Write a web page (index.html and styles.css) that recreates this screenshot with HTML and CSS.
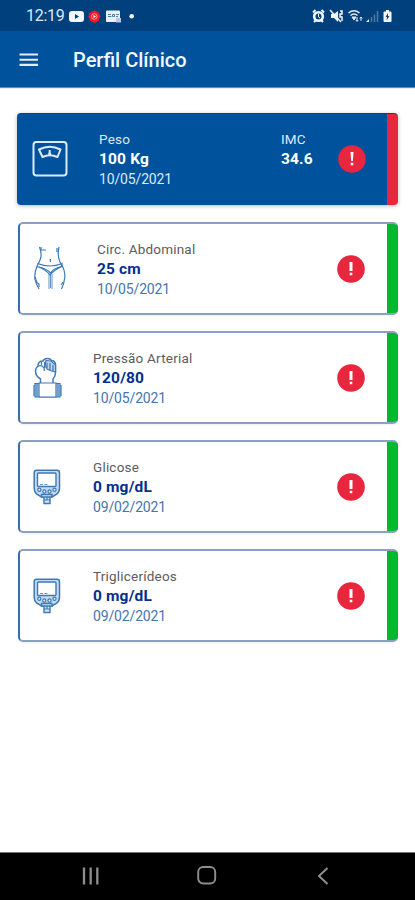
FILE: index.html
```
<!DOCTYPE html>
<html lang="pt-BR">
<head>
<meta charset="utf-8">
<meta name="viewport" content="width=device-width, initial-scale=1">
<title>Perfil Clínico</title>
<link rel="stylesheet" href="styles.css">
</head>
<body>
<svg width="0" height="0" class="defs" aria-hidden="true">
  <symbol id="meter" viewBox="0 0 28 36">
    <path d="M3.500 1.200h20.500q2.500 0 2.500 2.500V19q0 4-2.500 6l-5 3H8.500l-5-3Q1.200 23 1.200 19V3.700q0-2.500 2.300-2.500Z" fill="#c4dcf2" stroke-width="1.500"/>
    <rect x="4.500" y="4" width="18.500" height="13.500" rx="1" fill="#fff" stroke-width="1.400"/>
    <path d="M7 15.500h3M11.500 15.500h3" stroke-width=".8"/>
    <g fill="#e9f3fc"><circle cx="6.300" cy="20.800" r="1.600"/><circle cx="11.300" cy="22.500" r="1.600"/><circle cx="16.500" cy="22.500" r="1.600"/><circle cx="21.500" cy="20.800" r="1.600"/></g>
    <path d="M8.500 25.500h10.500v2.500H8.500ZM11 28h6v6.500h-6Z" fill="#d5e6f6" stroke-width="1.400"/><path d="M11 31h6M14 28v3"/>
  </symbol>
</svg>
<div class="screen">
  <header class="status">
    <span class="clock">12:19</span>
    <svg class="status-left" width="68" height="16" viewBox="0 0 68 16">
      <rect x="0" y="3" width="15" height="11" rx="3" fill="#f4f7fb"/><path d="M6 6l4 2.500L6 11Z" fill="#00407c"/>
      <path d="M25.500 2.300l4.500 2.400 1.200 3.500-1.500 4.500-4.200 2.300-4.500-2.300-1.500-4.500L20.700 4.700Z" fill="#f3192a"/><circle cx="25.300" cy="8.500" r="2.800" fill="none" stroke="#ff9a98"/><path d="M24.500 7l2.500 1.500-2.500 1.500Z" fill="#fff"/>
      <path d="M38 2.500h12a1 1 0 0 1 1 1V14H38a1 1 0 0 1-1-1V3.500a1 1 0 0 1 1-1Z" fill="#eaf0f7"/><path d="M39 6.500h3M39 8.500h3.500M43.500 6.500h2v2h-2ZM47 6.500h3M47 8.500h2" stroke="#557ba3" fill="none"/><rect x="47" y="10" width="5" height="4.500" fill="#b8cadf"/>
      <circle cx="62.700" cy="8.200" r="2.300" fill="#f4f7fb"/>
    </svg>
    <svg class="status-right" width="80" height="16" viewBox="0 0 80 16">
      <g fill="none" stroke="#f4f7fb"><circle cx="6.500" cy="8.500" r="4.300" stroke-width="2.600"/><path d="M1 4.500L3.500 2M9.500 2L12 4.500M2 14l2-2M11 14l-2-2" stroke-width="2"/><path d="M6.500 6v3l1.500 1"/></g>
      <path d="M19 6h3l4-3v11l-4-4h-3Z" fill="#f4f7fb"/><path d="M18 2l11 12M28 3h2v3h-2v3h2v4" fill="none" stroke="#f4f7fb" stroke-width="1.500"/>
      <g fill="none" stroke="#e2eaf4"><path d="M36.500 5q5.500-4.500 11 0M38.500 7.500q3.500-3 7 0" stroke-width="1.600"/><path d="M40 9h4l-2 3Z" fill="#e2eaf4"/><path d="M45 9v4M43.800 12L45 13.500l1.200-1.500M49 13V9M47.800 10.500L49 9l1.200 1.500"/></g>
      <path d="M54 14l3-3v3Z" fill="#e2eaf4"/><path d="M59.500 14V9M62.500 14V6.500M65.500 14V3" stroke="#4d7ba8" stroke-width="1.500"/>
      <path d="M72 3.500h2V2h3v1.500h2V14h-7Z" fill="#f4f7fb"/><path d="M71.500 4h8v9.500h-8Z" fill="#f4f7fb"/><path d="M76 5l-2.500 4H75l-.5 3.500L77.500 8H76Z" fill="#17436f"/>
    </svg>
  </header>
  <div class="appbar">
    <svg width="20" height="14" viewBox="0 0 20 14"><path d="M.5 1.500h18.500M.5 6.700h18.500M.5 11.900h18.500" stroke="#e5eef8" stroke-width="2.100"/></svg>
    <h1>Perfil Clínico</h1>
  </div>
  <main>
    <section class="card weight">
      <svg class="icon" width="36" height="36" viewBox="0 0 36 36" fill="none" stroke="#dceaff" stroke-width="2"><rect x="1.500" y="1" width="33" height="33.500" rx="3"/><path d="M7 8.500Q17.700 3 28.500 8.500L25.500 16q-7.800-3.500-15 0Z" stroke-linejoin="round"/><path d="M17.700 9v4"/><circle cx="17.700" cy="12.800" r="1.500" fill="#dceaff" stroke="none"/></svg>
      <div class="info"><span class="label">Peso</span><strong>100 Kg</strong><time>10/05/2021</time></div>
      <div class="imc"><span class="label">IMC</span><strong>34.6</strong></div>
      <svg class="alert" width="28" height="28" viewBox="0 0 28 28"><circle cx="14" cy="14" r="13.800"/><path d="M12.500 7h3l-.6 9h-1.800ZM12.700 17.700h2.600v2.600h-2.600Z"/></svg>
    </section>
    <section class="card waist">
      <svg class="icon line" width="34" height="46" viewBox="0 0 34 46"><path d="M6.500 1q3 8 .5 13-1 3-2.500 5Q1 27 2 33q1 5 4 10M26 1q-2 8 1 15l2 3q4 8 2.500 14-.5 5-3 10"/><path d="M4.500 17.500q12.500 5 24.500 0l-.5 3Q21 22 17.500 27Q13 22 4 20.500M4 20.500q9 3 13 8.500Q21 24 29 20.500"/><path d="M16 28v15M19 28v15M17.500 29v13" stroke-width=".8"/><path d="M7 4h6M24 2v4M17.300 13v3M3 36l3 2v3M30 36l-2 3M8 1v3M2 31l2 6"/></svg>
      <div class="info"><span class="label">Circ. Abdominal</span><strong>25 cm</strong><time>10/05/2021</time></div>
      <svg class="alert" width="28" height="28" viewBox="0 0 28 28"><circle cx="14" cy="14" r="13.800"/><path d="M12.500 7h3v9h-3ZM12.700 17.700h2.600v2.600h-2.600Z"/></svg>
    </section>
    <section class="card pressure">
      <svg class="icon line" width="29" height="42" viewBox="0 0 29 42"><path d="M7.500 26v-4Q2.500 19 2.500 14q0-3 2.500-5 0-5 5-5 1-2.500 4.500-2.500 3 0 4 2 3.500 0 4 4v8q0 4-2.500 6.500V26" stroke-width="1.500"/><path d="M13 3.500l5 .5 4.500 4v7l-4-1-4.500-2-2-4Z" fill="#bcd5ec"/><path d="M5 9q4-1 5 1 2 1 1 4M8.500 5v3M11.500 5v6M14 6v5M17 6v7M20 8v6"/><path d="M2 26.500h25v13.500H2Z" fill="#c4daef"/><path d="M6 26h17v14H6Z" fill="#fff"/><path d="M4 27v13M1 28v11M25 27v13M28 28v11"/></svg>
      <div class="info"><span class="label">Pressão Arterial</span><strong>120/80</strong><time>10/05/2021</time></div>
      <svg class="alert" width="28" height="28" viewBox="0 0 28 28"><circle cx="14" cy="14" r="13.800"/><path d="M12.500 7h3v9h-3ZM12.700 17.700h2.600v2.600h-2.600Z"/></svg>
    </section>
    <section class="card glucose">
      <svg class="icon line" width="28" height="36"><use href="#meter"/></svg>
      <div class="info"><span class="label">Glicose</span><strong>0 mg/dL</strong><time>09/02/2021</time></div>
      <svg class="alert" width="28" height="28" viewBox="0 0 28 28"><circle cx="14" cy="14" r="13.800"/><path d="M12.500 7h3v9h-3ZM12.700 17.700h2.600v2.600h-2.600Z"/></svg>
    </section>
    <section class="card triglycerides">
      <svg class="icon line" width="28" height="36"><use href="#meter"/></svg>
      <div class="info"><span class="label">Triglicerídeos</span><strong>0 mg/dL</strong><time>09/02/2021</time></div>
      <svg class="alert" width="28" height="28" viewBox="0 0 28 28"><circle cx="14" cy="14" r="13.800"/><path d="M12.500 7h3v9h-3ZM12.700 17.700h2.600v2.600h-2.600Z"/></svg>
    </section>
  </main>
  <nav>
    <svg width="18" height="18" viewBox="0 0 18 18"><path d="M2 .5v17M8.700.5v17M15.300.5v17" stroke-width="2.300"/></svg>
    <svg width="20" height="19" viewBox="0 0 20 19"><rect x="1.200" y="1" width="17" height="16.500" rx="5" stroke-width="1.900"/></svg>
    <svg width="12" height="18" viewBox="0 0 12 18"><path d="M10.500 1L2 9l8.500 8" stroke-width="2"/></svg>
  </nav>
</div>
</body>
</html>
```
FILE: styles.css
```
* { box-sizing: border-box; }
body { margin: 0; background: #fff; font-family: Roboto, "Liberation Sans", sans-serif; }
svg { display: block; flex: none; }
.defs { height: 0; }
.screen { width: 415px; height: 900px; display: flex; flex-direction: column; overflow: hidden; }
.status { height: 31px; flex: none; background: #00407c; display: flex; align-items: center; padding: 1px 23px 0 26px; color: #dfe9f4; }
.clock { font-size: 16px; line-height: 20px; width: 43px; letter-spacing: -.3px; white-space: nowrap; }
.status-right { margin-left: auto; }
.appbar { height: 56px; flex: none; background: #00529c; box-shadow: 0 1px 1px #6986b8; display: flex; align-items: center; gap: 34px; padding: 2px 19px 0; }
h1 { margin: 0; font-size: 20px; line-height: 28px; font-weight: 500; color: #f4f8ff; white-space: nowrap; }
main { flex: 1; padding: 26px 17px 0; display: flex; flex-direction: column; gap: 16px; }
.card { height: 93px; flex: none; margin-left: 1px; display: grid; grid-template-columns: 73px 1fr 28px; align-items: center; border: 2px solid #8ba1c4; border-left-color: #3b6dac; border-right-color: #4777a3; border-right-width: 1px; border-radius: 5px; background: linear-gradient(to left, #00b92c 10px, #fff 10px); box-shadow: 0 1px 2px #0001; padding-right: 32px; }
.icon { margin-left: 13px; }
.line { fill: none; stroke: #3d79b5; stroke-width: 1.200; }
.info, .imc { display: flex; flex-direction: column; line-height: 20px; white-space: nowrap; }
.label { font-size: 13.500px; color: #5c5c60; letter-spacing: .2px; }
strong { font-size: 15.500px; font-weight: 700; color: #052f8c; letter-spacing: .15px; }
time { font-size: 14px; color: #4775ae; letter-spacing: -.15px; }
.waist { grid-template-columns: 77px 1fr 28px; }
.alert { fill: #e8263d; }
.alert path { fill: #fff; }
.weight { height: 92px; margin-left: 0; background: linear-gradient(to left, #e8263d 11px, #00529c 11px); border: 0; border-top: 1px solid #123d91; border-radius: 4px; grid-template-columns: 82px 1fr 57px 28px; gap: 0; margin-bottom: 1px; box-shadow: 0 1px 4px #0004; padding-bottom: 1px; }
.weight .icon { margin-left: 15px; }
.weight .label, .weight time { color: #dce9fb; }
.weight strong { color: #fff; }
.imc { align-self: start; padding-top: 15px; }
nav { height: 48px; flex: none; background: #000; border-top: 1px solid #777; display: grid; grid-template-columns: 116px 116px 116px; justify-content: center; justify-items: center; align-items: center; padding: 0 1px 2px 0; }
nav svg { fill: none; stroke: #8d8d8d; }
```
